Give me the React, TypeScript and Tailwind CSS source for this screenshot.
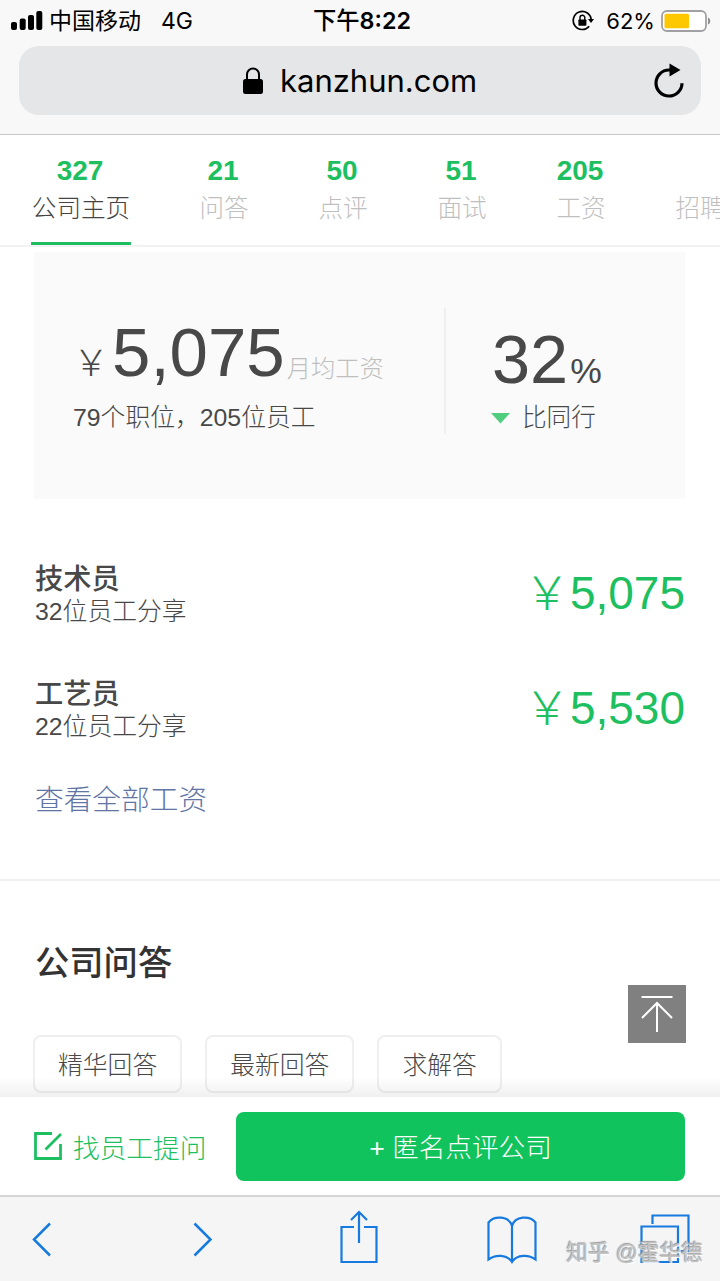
import type { ReactNode } from 'react';

const tabs = [
  { count: '327', label: '公司主页', active: true },
  { count: '21', label: '问答' },
  { count: '50', label: '点评' },
  { count: '51', label: '面试' },
  { count: '205', label: '工资' },
  { count: '', label: '招聘' },
];

const salaries = [
  { title: '技术员', shared: '32位员工分享', amount: '5,075' },
  { title: '工艺员', shared: '22位员工分享', amount: '5,530' },
];

const filters = ['精华回答', '最新回答', '求解答'];

function StatusBar() {
  return (
    <div className="grid h-10 grid-cols-3 items-center pr-[9px] pl-[11px] text-black">
      <div className="flex items-center">
        <svg width="32" height="20" viewBox="0 0 32 20">
          <rect x="0" y="11" width="6" height="8" rx="2" />
          <rect x="8.7" y="7.5" width="6" height="11.5" rx="2" />
          <rect x="17" y="4" width="6" height="15" rx="2" />
          <rect x="25.3" y="0" width="6" height="19" rx="2" />
        </svg>
        <span className="ml-1.5 pt-px text-[23px] leading-10 font-normal">中国移动</span>
        <span className="ml-5 font-[Inter] text-[23px] leading-10 font-normal">4G</span>
      </div>
      <div className="pl-0.5 text-center font-[Inter,'Noto_Sans_CJK_SC',sans-serif] text-[23.3px] leading-10 font-semibold whitespace-nowrap">
        <span className="font-medium">下午</span>8:22
      </div>
      <div className="flex items-center justify-end">
        <svg width="22" height="22" viewBox="0 0 22 22" fill="none" stroke="black" strokeWidth="1.7">
          <path d="M17.2 16.2a9 9 0 1 1 2-6.6" />
          <path d="M16 9h6l-3 4z" fill="black" stroke="none" />
          <rect x="6.4" y="9.5" width="8" height="6.3" rx="0.8" fill="black" stroke="none" />
          <path d="M8 10V7.6a2.4 2.4 0 0 1 4.800 0V10" strokeWidth="1.4" />
        </svg>
        <span className="ml-3 font-[Inter] text-[22px] leading-10 font-normal">62%</span>
        <svg className="ml-1.5" width="50" height="22" viewBox="0 0 50 22">
          <rect x="1" y="1" width="44" height="20" rx="5" fill="white" stroke="#a0a0a3" strokeWidth="1.8" />
          <rect x="3.5" y="3.7" width="24.5" height="14.6" rx="1.5" fill="#fdc800" />
          <path d="M47 7.5c3 1 3 6 0 7z" fill="#8e8e92" />
        </svg>
      </div>
    </div>
  );
}

function AddressBar() {
  return (
    <div className="mx-[19px] mt-1.5 flex h-[69px] items-center rounded-[20px] bg-[#e5e6e8] pr-4 pl-[224px]">
      <svg width="20" height="28" viewBox="0 0 20 28">
        <path d="M4 13V7.5a6 6 0 0 1 12 0V13" fill="none" stroke="black" strokeWidth="2" />
        <rect x="0" y="12" width="20" height="15" rx="2.5" />
      </svg>
      <span className="ml-[17px] font-[Inter] text-[31px] leading-[69px] font-normal text-black">kanzhun.com</span>
      <svg className="ml-auto" width="31" height="36" viewBox="0 0 31 36">
        <path d="M28 20.2A13 13 0 1 1 15 7h3" fill="none" stroke="black" strokeWidth="3.2" />
        <path d="M15.5 0.5v13L26.5 7z" />
      </svg>
    </div>
  );
}

function TabBar() {
  return (
    <nav className="flex h-[112px] overflow-hidden border-b-2 border-[#f2f2f2] pl-[31px]">
      {tabs.map((tab) => (
        <div
          key={tab.label}
          className={
            tab.active
              ? 'mr-[68px] flex h-[111px] w-[100px] shrink-0 flex-col items-center text-[#444]'
              : 'mr-[69px] flex h-[111px] w-[50px] shrink-0 flex-col items-center text-[#bfbfbf]'
          }
        >
          <span className="mt-[18px] mr-0.5 h-9 text-[28px] leading-9 font-bold text-[#1dbf60]">{tab.count}</span>
          <span className="h-10 text-[24.6px] leading-10">{tab.label}</span>
          {tab.active && <div className="mt-[13px] h-1 w-full bg-[#1dbf60]" />}
        </div>
      ))}
    </nav>
  );
}

function Summary() {
  return (
    <section className="mx-[34px] mt-[5px] flex h-[247px] w-[651px] bg-[#fafafa] text-[#484848]">
      <div className="mt-14 flex h-[126px] w-[412px] flex-col border-r-2 border-[#efefef] pl-[39px]">
        <div className="flex h-[88px] items-baseline pt-px whitespace-nowrap">
          <span className="text-[36px]">￥</span>
          <span className="ml-[3px] text-[69px] leading-[88px]">5,075</span>
          <span className="ml-0.5 text-[24.3px]">
            <span className="relative top-px text-[#bfbfbf]">月均工资</span>
          </span>
        </div>
        <p className="pt-px text-[24.8px] leading-[42px]">79个职位，205位员工</p>
      </div>
      <div className="mt-14 flex h-[126px] flex-col pl-[46px]">
        <div className="mt-2 flex h-20 items-baseline">
          <span className="text-[68.5px] leading-[88px]">32</span>
          <span className="ml-0.5 text-[35.5px]">%</span>
        </div>
        <div className="flex items-center pt-px text-[24.6px] leading-[42px]">
          <svg className="mr-3 -ml-px" width="19" height="11" viewBox="0 0 19 11">
            <path d="M0 0h19l-9.5 10.5z" fill="#4fce80" />
          </svg>
          比同行
        </div>
      </div>
    </section>
  );
}

function ToolButton({ children, width }: { children: ReactNode; width: number }) {
  return (
    <svg width={width} height="56" viewBox={`0 0 ${width} 56`} fill="none" stroke="#167adf" strokeWidth="2.2">
      {children}
    </svg>
  );
}

export default function App() {
  return (
    <div className="flex h-[1281px] w-[720px] flex-col overflow-hidden bg-white font-['Liberation_Sans','Noto_Sans_CJK_SC',sans-serif] font-light">
      <header className="h-[135px] shrink-0 border-b border-[#c8c8c8] bg-[#f8f8f9]">
        <StatusBar />
        <AddressBar />
      </header>
      <TabBar />

      <main className="relative h-[850px] shrink-0 overflow-hidden">
        <Summary />

        <section className="h-[382px] border-b-2 border-[#f0f0f0] px-[35px] pt-[60px]">
          {salaries.map((item) => (
            <div key={item.title} className="flex h-[115px] justify-between text-[#484848]">
              <div className="pt-0.5">
                <h3 className="h-[35px] text-[28.3px] leading-9 font-medium">{item.title}</h3>
                <p className="text-[24.8px] leading-8">{item.shared}</p>
              </div>
              <div className="flex h-[68px] items-baseline text-[46px] leading-[68px] text-[#1dbf60]">
                <span>￥</span>
                <span>{item.amount}</span>
              </div>
            </div>
          ))}
          <a className="-mt-[7px] block text-[28.7px] leading-[36px] text-[#6175a5]">查看全部工资</a>
        </section>

        <section className="pt-[58px] pl-[33px]">
          <h2 className="pl-0.5 text-[34.3px] leading-[48px] font-medium text-[#333]">公司问答</h2>
          <div className="mt-12 flex gap-[23px]">
            {filters.map((name) => (
              <span
                key={name}
                className="h-[58px] rounded-lg border-2 border-[#efefef] px-[23px] text-[24.8px] leading-[57px] text-[#484848]"
              >
                {name}
              </span>
            ))}
          </div>
        </section>

        <button className="absolute right-[34px] bottom-[54px] flex size-[58px] justify-center bg-[#808080]">
          <svg width="32" height="58" viewBox="0 0 32 58" fill="none" stroke="white" strokeWidth="2">
            <path d="M0.5 12h31M16 47V18M1 33l15-15 15 15" />
          </svg>
        </button>
        <div className="absolute inset-x-0 bottom-0 h-5 bg-linear-to-t from-black/6 to-transparent" />
      </main>

      <div className="flex h-[98px] shrink-0 items-center pr-[35px] pl-[34px]">
        <svg width="28" height="28" viewBox="0 0 28 28" fill="none" stroke="#1dbf60" strokeWidth="2.8">
          <path d="M18 1.5H1.5v25h25V12M11.5 17.5L27 2" />
        </svg>
        <span className="ml-[11px] pt-1.5 text-[26.7px] text-[#1dbf60]">找员工提问</span>
        <button className="ml-auto h-[69px] w-[449px] rounded-lg bg-[#11c35c] pt-1.5 text-[26.6px] text-white">
          + 匿名点评公司
        </button>
      </div>

      <footer className="relative flex h-[86px] shrink-0 border-t-2 border-[#d5d5d5] bg-[#f5f5f5] pt-[13px] pl-[30px]">
        <ToolButton width={22}>
          <path d="M20 13.500L4 29.500 20 45.500" strokeWidth="2.5" />
        </ToolButton>
        <div className="ml-[140px] flex">
          <ToolButton width={22}>
            <path d="M2.500 13.500l16 16-16 16" strokeWidth="2.5" />
          </ToolButton>
        </div>
        <div className="ml-[126px] flex">
          <ToolButton width={38}>
            <path d="M14 17H1.5v35h35V17H24M19 33V2M11 10l8-8 8 8" />
          </ToolButton>
        </div>
        <div className="ml-[109px] flex">
          <ToolButton width={50}>
            <path d="M25 52V16C22 5.500 7 5.500 1.500 12.500v37C8 44.500 20 44 25 52c5-8 17-7.500 23.500-2.500v-37C43 5.500 28 5.500 25 16" />
          </ToolButton>
        </div>
        <div className="ml-[103px] flex">
          <ToolButton width={50}>
            <path d="M1.500 16.500h36.500V52H1.500zM12.500 14V5.500h36V41H39" />
          </ToolButton>
        </div>
        <span className="absolute right-[17px] bottom-[10px] text-[21.700px] leading-9 font-normal whitespace-nowrap text-[#c4c4c4] [text-shadow:-1px_-1px_1px_#999,1px_1px_1px_#fff]">
          知乎 @霍华德
        </span>
      </footer>
    </div>
  );
}
